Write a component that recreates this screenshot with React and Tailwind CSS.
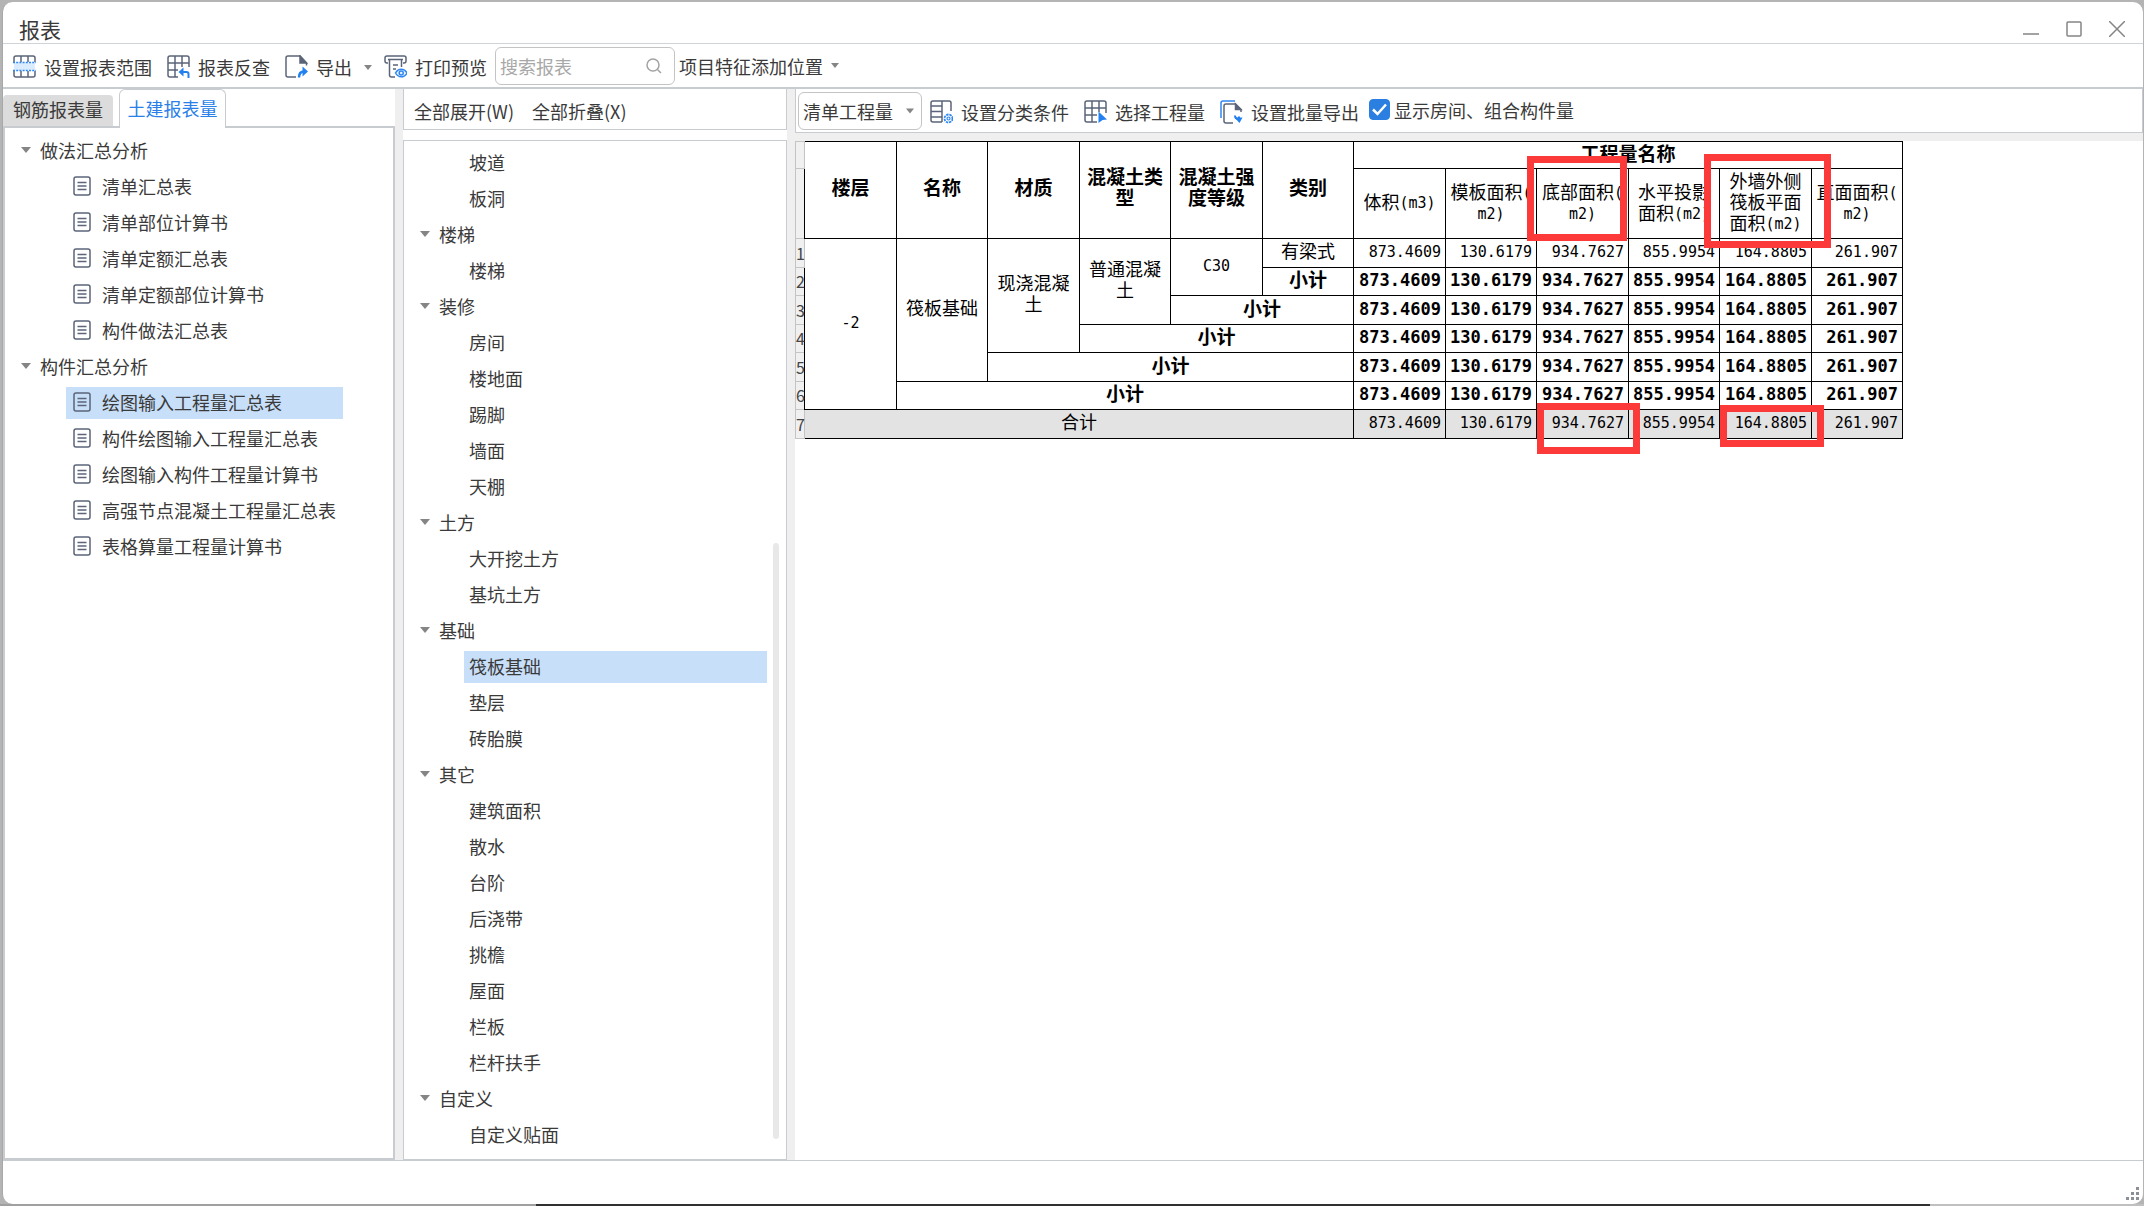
import React, { useState } from 'react';
import clsx from 'clsx';

const reportTree = [
  {
    label: '做法汇总分析',
    items: ['清单汇总表', '清单部位计算书', '清单定额汇总表', '清单定额部位计算书', '构件做法汇总表'],
  },
  {
    label: '构件汇总分析',
    items: [
      '绘图输入工程量汇总表',
      '构件绘图输入工程量汇总表',
      '绘图输入构件工程量计算书',
      '高强节点混凝土工程量汇总表',
      '表格算量工程量计算书',
    ],
  },
];

const componentTree = [
  { items: ['坡道', '板洞'] },
  { label: '楼梯', items: ['楼梯'] },
  { label: '装修', items: ['房间', '楼地面', '踢脚', '墙面', '天棚'] },
  { label: '土方', items: ['大开挖土方', '基坑土方'] },
  { label: '基础', items: ['筏板基础', '垫层', '砖胎膜'] },
  {
    label: '其它',
    items: ['建筑面积', '散水', '台阶', '后浇带', '挑檐', '屋面', '栏板', '栏杆扶手'],
  },
  { label: '自定义', items: ['自定义贴面'] },
];

const groupHeads = [['楼层'], ['名称'], ['材质'], ['混凝土类', '型'], ['混凝土强', '度等级'], ['类别']];

const quantityHeads = [
  ['体积(m3)'],
  ['模板面积(', 'm2)'],
  ['底部面积(', 'm2)'],
  ['水平投影', '面积(m2)'],
  ['外墙外侧', '筏板平面', '面积(m2)'],
  ['直面面积(', 'm2)'],
];

const values = ['873.4609', '130.6179', '934.7627', '855.9954', '164.8805', '261.907'];

const rows = [
  {
    cells: [
      { lines: ['-2'], rowSpan: 6 },
      { lines: ['筏板基础'], rowSpan: 5 },
      { lines: ['现浇混凝', '土'], rowSpan: 4 },
      { lines: ['普通混凝', '土'], rowSpan: 3 },
      { lines: ['C30'], rowSpan: 2 },
      { lines: ['有梁式'] },
    ],
  },
  { bold: true, cells: [{ lines: ['小计'] }] },
  { bold: true, cells: [{ lines: ['小计'], colSpan: 2 }] },
  { bold: true, cells: [{ lines: ['小计'], colSpan: 3 }] },
  { bold: true, cells: [{ lines: ['小计'], colSpan: 4 }] },
  { bold: true, cells: [{ lines: ['小计'], colSpan: 5 }] },
  { total: true, cells: [{ lines: ['合计'], colSpan: 6 }] },
];

const Icon = ({ children, className = 'h-6 w-[23px]' }) => (
  <svg viewBox="0 0 23 24" fill="none" stroke="#5b6478" strokeWidth="1.5" className={`shrink-0 ${className}`} aria-hidden="true">
    {children}
  </svg>
);

const RangeIcon = () => (
  <Icon>
    <path d="M1 7V3a2 2 0 0 1 2-2h17a2 2 0 0 1 2 2v4M1 16v4a2 2 0 0 0 2 2h17a2 2 0 0 0 2-2v-4M8 1v6M15 1v6M8 16v6M15 16v6" />
    <path d="M1 7.500h21v8H1z" fill="#dcecff" stroke="none" />
    <path d="M0 7.500h23M0 15.500h23" stroke="#2f86f0" strokeDasharray="2 1.200" />
  </Icon>
);

const TraceIcon = () => (
  <Icon>
    <path d="M22 12V3a2 2 0 0 0-2-2H3a2 2 0 0 0-2 2v17a2 2 0 0 0 2 2h8M8 1v21M15 1v11M1 8h21M1 15h10" />
    <path d="M13 17h6.500a2 2 0 0 1 2 2v4" stroke="#2280f0" strokeWidth="2" />
    <path d="M11.500 17l5-4.500v9z" fill="#2280f0" stroke="none" />
  </Icon>
);

const ExportIcon = () => (
  <Icon>
    <path d="M11 22H3a2 2 0 0 1-2-2V3a2 2 0 0 1 2-2h12l6.500 7v2.500" />
    <path d="M15 1v7h6.500z" fill="#5b6478" />
    <path d="M14 22.500c0-4 1.500-6 5-6" stroke="#2280f0" strokeWidth="2.500" />
    <path d="M17.500 11.500l5.500 5-5.500 5z" fill="#2280f0" stroke="none" />
  </Icon>
);

const PreviewIcon = () => (
  <Icon>
    <path d="M4 8H3a2 2 0 0 1-2-2V3a2 2 0 0 1 2-2h17a2 2 0 0 1 2 2v3a2 2 0 0 1-2 2h-1M4 4.500h15M5.500 4.500V20a2 2 0 0 0 2 2H11M17.500 4.500V12M9 10h5M9 14h3" />
    <path d="M11.500 18c2.800-5 8.700-5 11.500 0-2.800 5-8.700 5-11.500 0z" stroke="#2f86f0" fill="#eaf3ff" />
    <circle cx="17.200" cy="18" r="2" stroke="#2f86f0" />
  </Icon>
);

const CategoryIcon = () => (
  <Icon>
    <path d="M21 11V3a2 2 0 0 0-2-2H3a2 2 0 0 0-2 2v17a2 2 0 0 0 2 2h9M12 1v21M1 6h11M1 11.500h11M1 17h11" />
    <circle cx="18.500" cy="18.500" r="4" stroke="#2f86f0" strokeWidth="1.800" strokeDasharray="2.400 0.800" />
    <circle cx="18.500" cy="18.500" r="1.500" stroke="#2f86f0" strokeWidth="1.200" />
  </Icon>
);

const PickIcon = () => (
  <Icon>
    <path d="M22 13V3a2 2 0 0 0-2-2H3a2 2 0 0 0-2 2v17a2 2 0 0 0 2 2h10M8 1v21M15 1v11M1 8h21M1 15h12" />
    <path d="M14.500 11.500l8.500 8-4.500.5-4 3z" fill="#2280f0" stroke="none" />
  </Icon>
);

const BatchIcon = () => (
  <Icon>
    <path d="M1 18V3a2 2 0 0 1 2-2h12" stroke="#2f86f0" />
    <path d="M13 23H6a2 2 0 0 1-2-2V6a2 2 0 0 1 2-2h9.500l5.500 5.500V12" />
    <path d="M15.500 4v5.500H21z" fill="#5b6478" />
    <path d="M15 15.500c0 2.500 1 3.500 4 3.500v-2.500" stroke="#2280f0" strokeWidth="2" />
    <path d="M14.500 17.500h8L19.500 23z" fill="#2280f0" stroke="none" />
  </Icon>
);

const SheetIcon = () => (
  <svg viewBox="0 0 18 20" fill="none" stroke="#5b6478" strokeWidth="1.500" className="h-5 w-[18px] shrink-0" aria-hidden="true">
    <rect x="1" y="1" width="16" height="18" rx="2" />
    <path d="M4.500 6.500h9M4.500 10h9M4.500 13.500h9" />
  </svg>
);

const Caret = ({ className = 'h-[5px] w-2' }) => (
  <svg viewBox="0 0 10 6" className={`shrink-0 ${className}`} aria-hidden="true">
    <path d="M0 0h10L5 6z" fill="#858585" />
  </svg>
);

const ToolButton = ({ icon, label }) => (
  <button type="button" className="flex shrink-0 items-center gap-2 pt-[2px]">
    {icon}
    <span>{label}</span>
  </button>
);

const TitleBar = () => (
  <header className="flex h-[42px] shrink-0 items-center justify-between border-b border-[#d0d3d8] pl-4 pr-[18px] pt-3">
    <h1 className="text-[21px] leading-6">报表</h1>
    <div className="flex gap-[27px] text-[#858585]">
      <button type="button" aria-label="最小化">
        <svg viewBox="0 0 16 16" className="size-4" stroke="currentColor" strokeWidth="1.500"><path d="M0 13h16" /></svg>
      </button>
      <button type="button" aria-label="最大化">
        <svg viewBox="0 0 16 16" className="size-4" stroke="currentColor" strokeWidth="1.500" fill="none"><rect x="1" y="1" width="14" height="14" rx="1" /></svg>
      </button>
      <button type="button" aria-label="关闭">
        <svg viewBox="0 0 16 16" className="size-4" stroke="currentColor" strokeWidth="1.500"><path d="M0 0l16 16M16 0L0 16" /></svg>
      </button>
    </div>
  </header>
);

const Toolbar = () => (
  <div className="flex h-[45px] shrink-0 items-center border-b-2 border-[#c8cbd0] pl-[10px]">
    <div className="flex items-center gap-[15px]">
      <ToolButton icon={<RangeIcon />} label="设置报表范围" />
      <ToolButton icon={<TraceIcon />} label="报表反查" />
      <ToolButton icon={<ExportIcon />} label="导出" />
    </div>
    <button type="button" aria-label="导出选项" className="px-3 pt-1">
      <Caret />
    </button>
    <ToolButton icon={<PreviewIcon />} label="打印预览" />
    <label className="ml-2 flex h-[38px] w-[180px] items-center rounded-md border border-[#c4c4c4] pl-1 pr-3">
      <input type="text" aria-label="搜索报表" placeholder="搜索报表" className="min-w-0 flex-1 outline-none placeholder:text-[#a8a8a8]" />
      <svg viewBox="0 0 16 16" fill="none" stroke="#a3a3a3" strokeWidth="1.500" className="size-4" aria-hidden="true">
        <circle cx="7" cy="7" r="6" />
        <path d="M11.500 11.500L15 15" />
      </svg>
    </label>
    <button type="button" className="ml-1 flex items-center gap-2">
      项目特征添加位置
      <Caret />
    </button>
  </div>
);

const GroupRow = ({ label, className }) => (
  <button type="button" className={`flex h-9 w-full items-center gap-[9px] pb-[2px] ${className}`}>
    <Caret className="h-[6px] w-[10px]" />
    {label}
  </button>
);

const ReportPanel = () => {
  const [selected, setSelected] = useState('绘图输入工程量汇总表');

  return (
    <aside className="flex w-[392px] shrink-0 flex-col">
      <div role="tablist" className="flex h-[37px] shrink-0 items-end gap-[6px]">
        <button type="button" role="tab" aria-selected="false" className="h-[31px] w-[110px] rounded-t bg-[#dcdcdc] pb-1">
          钢筋报表量
        </button>
        <button type="button" role="tab" aria-selected="true" className="relative -mb-[2px] h-[39px] w-[107px] rounded-t-md border border-b-0 border-[#c8cbd0] bg-white pb-[2px] text-[#2a7fe8]">
          土建报表量
        </button>
      </div>
      <div className="min-h-0 flex-1 overflow-hidden border-2 border-[#c8cbd0] pt-[5px]">
        {reportTree.map((group) => (
          <div key={group.label}>
            <GroupRow label={group.label} className="pl-4" />
            <ul className="pl-[61px]">
              {group.items.map((item) => (
                <li key={item} className="flex h-9 items-center">
                  <button
                    type="button"
                    onClick={() => setSelected(item)}
                    className={clsx(
                      'flex h-8 w-[277px] items-center gap-[11px] whitespace-nowrap pb-[2px] pl-[7px]',
                      selected === item && 'bg-[#c8dff9]'
                    )}
                  >
                    <SheetIcon />
                    {item}
                  </button>
                </li>
              ))}
            </ul>
          </div>
        ))}
      </div>
    </aside>
  );
};

const ComponentPanel = () => {
  const [selected, setSelected] = useState('基础/筏板基础');

  return (
    <section className="flex w-[384px] shrink-0 flex-col gap-[10px]">
      <div className="flex h-[41px] shrink-0 items-center gap-[18px] border border-t-0 border-[#c8cbd0] pl-[10px] pt-[3px]">
        <button type="button">全部展开(W)</button>
        <button type="button">全部折叠(X)</button>
      </div>
      <div className="flex min-h-0 flex-1 overflow-hidden border border-[#c8cbd0] pt-1">
        <div className="flex-1">
          {componentTree.map((group, idx) => (
            <div key={idx}>
              {group.label && <GroupRow label={group.label} className="pl-4" />}
              <ul className="pl-[60px]">
                {group.items.map((item) => {
                  const key = `${group.label}/${item}`;
                  return (
                    <li key={key} className="flex h-9 items-center">
                      <button
                        type="button"
                        onClick={() => setSelected(key)}
                        className={clsx('h-8 w-full pb-[2px] pl-[5px] text-left', selected === key && 'bg-[#c8dff9]')}
                      >
                        {item}
                      </button>
                    </li>
                  );
                })}
              </ul>
            </div>
          ))}
        </div>
        {/* scroll thumb */}
        <div className="flex w-[19px] flex-col justify-end pb-5 pl-[6px]">
          <div className="h-3/5 w-[6px] rounded-full bg-[#e8e8e8]" />
        </div>
      </div>
    </section>
  );
};

// CJK glyphs are full width, latin ones take half of that
const Mixed = ({ lines }) =>
  lines.map((line, idx) => (
    <span key={idx} className="block whitespace-nowrap">
      {line.split(/([\x20-\x7e]+)/).filter(Boolean).map((part, i) =>
        /^[\x20-\x7e]/.test(part) ? (
          <span key={i} className="align-[1px] font-['DejaVu_Sans_Mono',monospace] text-[15px] leading-4">{part}</span>
        ) : (
          part
        )
      )}
    </span>
  ));

const RowHead = ({ children }) => (
  <th scope="row" className="border border-[#c4c4c4] bg-[#f0f0f0] p-0 text-[16px] font-normal text-[#444]">
    {children}
  </th>
);

const QuantityTable = () => (
  <table className="w-[1108px] table-fixed border-collapse text-center text-[18px] leading-[21px] text-black">
    <colgroup>
      <col className="w-[9px]" />
      {groupHeads.concat(quantityHeads).map((_, idx) => (
        <col key={idx} className={idx % 2 ? 'w-[91px]' : 'w-[92px]'} />
      ))}
    </colgroup>
    <thead>
      <tr className="h-[27px]">
        <RowHead />
        {groupHeads.map((lines) => (
          <th key={lines[0]} rowSpan={2} className="border border-black p-0 pb-2 text-[19px] font-bold">
            <Mixed lines={lines} />
          </th>
        ))}
        <th colSpan={6} className="border border-black p-0 pb-[5px] text-[19px] font-bold">工程量名称</th>
      </tr>
      <tr className="h-[70px]">
        <RowHead />
        {quantityHeads.map((lines) => (
          <th key={lines[0]} className="border border-black p-0 pb-1 font-normal">
            <Mixed lines={lines} />
          </th>
        ))}
      </tr>
    </thead>
    <tbody>
      {rows.map((row, idx) => (
        <tr key={idx} className={clsx(idx % 2 ? 'h-[28px]' : 'h-[29px]', row.total && 'bg-[#e3e3e3]')}>
          <RowHead>{idx + 1}</RowHead>
          {row.cells.map(({ lines, ...span }) => (
            <td key={lines[0]} {...span} className={clsx('border border-black p-0 pb-[6px]', row.bold && 'text-[19px] font-bold')}>
              <Mixed lines={lines} />
            </td>
          ))}
          {values.map((value) => (
            <td
              key={value}
              className={clsx(
                "border border-black p-0 pb-[2px] pr-1 text-right font-['DejaVu_Sans_Mono',monospace]",
                row.bold ? 'text-[17px] font-bold' : 'text-[15px]'
              )}
            >
              {value}
            </td>
          ))}
        </tr>
      ))}
    </tbody>
  </table>
);

const Marker = ({ className }) => (
  <div className={`pointer-events-none absolute border-[7px] border-[#fd3a3a] ${className}`} />
);

const QuantityPanel = () => {
  const [showRooms, setShowRooms] = useState(true);

  return (
    <main className="flex min-w-0 flex-1 flex-col">
      <div className="flex h-11 shrink-0 items-center border border-t-0 border-[#c8cbd0] pl-[2px]">
        <div className="relative">
          <select aria-label="工程量类型" className="h-[38px] w-[124px] appearance-none rounded-md border border-[#c4c4c4] pl-1">
            <option>清单工程量</option>
          </select>
          <Caret className="pointer-events-none absolute right-2 top-4 h-[6px] w-2" />
        </div>
        <div className="ml-2 flex items-center gap-[15px]">
          <ToolButton icon={<CategoryIcon />} label="设置分类条件" />
          <ToolButton icon={<PickIcon />} label="选择工程量" />
          <ToolButton icon={<BatchIcon />} label="设置批量导出" />
        </div>
        <label className="ml-[10px] flex items-center gap-1 pb-[2px]">
          <span className="relative flex">
            <input
              type="checkbox"
              checked={showRooms}
              onChange={(e) => setShowRooms(e.target.checked)}
              className="size-[21px] appearance-none rounded-sm border border-[#2a7fe0] checked:bg-[#2a7fe0]"
            />
            {showRooms && (
              <svg viewBox="0 0 21 21" fill="none" stroke="#fff" strokeWidth="2.500" className="pointer-events-none absolute inset-0 size-[21px]" aria-hidden="true">
                <path d="M4 10.500l4.500 4.500L17 5.500" />
              </svg>
            )}
          </span>
          显示房间、组合构件量
        </label>
      </div>
      <div className="h-2 shrink-0 bg-[#efefef]" />
      <div className="min-h-0 flex-1 overflow-hidden">
        <div className="relative w-max">
          <QuantityTable />
          <Marker className="left-[732px] top-[15px] h-[85px] w-[100px]" />
          <Marker className="left-[909px] top-[13px] h-[94px] w-[127px]" />
          <Marker className="left-[742px] top-[262px] h-[51px] w-[103px]" />
          <Marker className="left-[925px] top-[264px] h-[42px] w-[104px]" />
        </div>
      </div>
    </main>
  );
};

const StatusBar = () => (
  <footer className="flex h-11 shrink-0 items-end justify-end border-t border-[#c8cbd0] p-1">
    <svg viewBox="0 0 13 13" className="size-[13px]" fill="#8a8f98" aria-hidden="true">
      <path d="M10 0h3v3h-3zM5 5h3v3H5zM10 5h3v3h-3zM0 10h3v3H0zM5 10h3v3H5zM10 10h3v3h-3z" />
    </svg>
  </footer>
);

export default function App() {
  return (
    <div className="flex h-screen flex-col bg-[#b4b4b4] pt-[2px] font-['Noto_Sans_CJK_SC',sans-serif] text-[18px] leading-6 text-[#3a3a3a]">
      <div className="ml-[2px] mr-px flex min-h-0 flex-1 flex-col overflow-hidden rounded-[10px] border-l border-[#a8a8a8] bg-white">
        <TitleBar />
        <Toolbar />
        <div className="flex min-h-0 flex-1">
          <ReportPanel />
          <div className="w-2 shrink-0 bg-[#efefef]" />
          <ComponentPanel />
          <div className="w-2 shrink-0 bg-[#efefef]" />
          <QuantityPanel />
        </div>
        <StatusBar />
      </div>
      {/* sliver of the main window behind */}
      <div className="flex h-[2px] shrink-0">
        <div className="w-1/4 bg-[#a0a0a0]" />
        <div className="flex-1 bg-[#303030]" />
        <div className="w-1/10 bg-[#c0c0c0]" />
      </div>
    </div>
  );
}
